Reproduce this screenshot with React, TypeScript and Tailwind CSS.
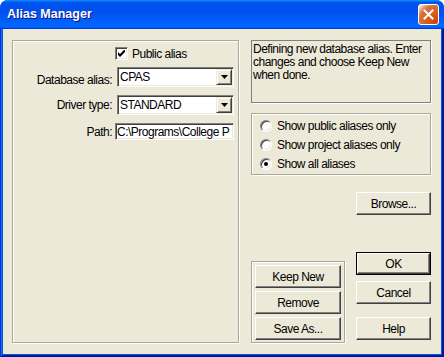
import React from "react";

const sunken =
  "border border-t-[#808080] border-l-[#808080] border-b-white border-r-white shadow-[inset_1px_1px_0_#404040,inset_-1px_-1px_0_#ECE9D8]";
const raised =
  "bg-[#ECE9D8] border border-t-white border-l-white border-b-[#404040] border-r-[#404040] shadow-[inset_-1px_-1px_0_#808080]";
const etched = "border border-[#ACA899] shadow-[inset_1px_1px_0_#fff,1px_1px_0_#fff]";

function Btn({ children, className = "" }: { children: React.ReactNode; className?: string }) {
  return (
    <div className={`h-[23px] flex items-center justify-center text-black ${raised} ${className}`}>
      {children}
    </div>
  );
}

function DefBtn({ children, className = "" }: { children: React.ReactNode; className?: string }) {
  return (
    <div className={`h-[23px] border border-black flex ${className}`}>
      <div className={`flex-1 flex items-center justify-center text-black ${raised}`}>{children}</div>
    </div>
  );
}

function Combo({ value }: { value: string }) {
  return (
    <div className={`ml-[5px] w-[117px] h-[20px] bg-white flex p-[1px] ${sunken}`}>
      <div className="flex-1 flex items-center pl-[1px] leading-none">{value}</div>
      <div className="w-[16px] h-[16px] flex items-center justify-center border border-t-[#ECE9D8] border-l-[#ECE9D8] border-b-[#404040] border-r-[#404040] bg-[#ECE9D8] shadow-[inset_1px_1px_0_#fff,inset_-1px_-1px_0_#808080]">
        <svg width="7" height="4" viewBox="0 0 7 4">
          <path d="M0 0H7L3.5 4Z" fill="#000" />
        </svg>
      </div>
    </div>
  );
}

function Radio({ checked, label }: { checked?: boolean; label: string }) {
  return (
    <div className="h-[20px] flex items-center">
      <div className="w-[12px] h-[12px] rounded-full bg-white border border-t-[#808080] border-l-[#808080] border-b-white border-r-white shadow-[inset_1px_1px_0_#404040,inset_-1px_-1px_0_#ECE9D8] flex items-center justify-center">
        {checked && <div className="w-[4px] h-[4px] rounded-full bg-black" />}
      </div>
      <span className="ml-[5px]">{label}</span>
    </div>
  );
}

export default function App() {
  return (
    <div className="w-[444px] h-[357px] flex flex-col rounded-t-[8px] overflow-hidden bg-[#0855DD] font-['Liberation_Sans',Arial,sans-serif] text-[12px] tracking-[-0.5px] text-black">
      <div className="h-[29px] shrink-0 flex items-center pl-[7px] pr-[5px] bg-[linear-gradient(180deg,#0997ff,#0053ee_8%,#0050ee_40%,#06f_88%,#06f_93%,#005bff_95%,#003dd7_96%,#003dd7)]">
        <span className="text-white font-bold text-[12.5px] tracking-normal [text-shadow:1px_1px_#0f1089] leading-none">
          Alias Manager
        </span>
        <div className="ml-auto w-[21px] h-[21px] rounded-[3px] border border-white flex items-center justify-center bg-[radial-gradient(circle_at_90%_90%,#cc4600_0%,#dc6527_55%,#cd7546_70%,#ffccb2_90%,#fff_100%)]">
          <svg width="11" height="11" viewBox="0 0 11 11">
            <path d="M1.5 1.5L9.5 9.5M9.5 1.5L1.5 9.5" stroke="#fff" strokeWidth="2" strokeLinecap="square" />
          </svg>
        </div>
      </div>
      <div className="flex-1 px-[3px] pb-[3px] shadow-[inset_1px_0_0_#0831d9,inset_-1px_0_0_#00138c,inset_0_-1px_0_#00138c,inset_2px_0_0_#166aee,inset_-2px_0_0_#001ea0,inset_0_-2px_0_#001ea0]">
        <div className="h-full bg-[#ECE9D8] flex pl-[9px] pt-[11px]">
          <div className={`w-[227px] h-[303px] ${etched} pt-[6px] flex flex-col`}>
            <div className="h-[13px] flex items-center pl-[102px]">
              <div className={`w-[13px] h-[13px] bg-white flex items-center justify-center ${sunken}`}>
                <svg width="7" height="7" viewBox="0 0 7 7">
                  <path d="M0 2V5L2 7L7 2V-1L2 4Z" fill="#000" />
                </svg>
              </div>
              <span className="ml-[4px]">Public alias</span>
            </div>
            <div className="mt-[7px] h-[20px] flex">
              <div className="w-[99px] text-right pt-[7px] leading-none">Database alias:</div>
              <Combo value="CPAS" />
            </div>
            <div className="mt-[8px] h-[20px] flex">
              <div className="w-[99px] flex items-center justify-end leading-none">Driver type:</div>
              <Combo value="STANDARD" />
            </div>
            <div className="mt-[8px] h-[17px] flex">
              <div className="w-[99px] flex items-center justify-end leading-none">Path:</div>
              <div className={`ml-[3px] w-[119px] h-[17px] bg-white flex items-center pl-[1px] overflow-hidden whitespace-nowrap leading-none ${sunken}`}>
                C:\Programs\College P
              </div>
            </div>
          </div>
          <div className="ml-[12px] w-[180px] h-[303px] flex flex-col">
            <div className="h-[63px] border border-[#808080] shadow-[1px_1px_0_#fff] px-[1px] pt-[2px] leading-[13px] whitespace-nowrap">
              Defining new database alias. Enter
              <br />
              changes and choose Keep New
              <br />
              when done.
            </div>
            <div className={`mt-[10px] h-[62px] ${etched} pt-[2px] pl-[8px] flex flex-col`}>
              <Radio label="Show public aliases only" />
              <Radio label="Show project aliases only" />
              <Radio checked label="Show all aliases" />
            </div>
            <Btn className="mt-[17px] self-end w-[75px]">Browse...</Btn>
            <div className="mt-auto flex items-end justify-between">
              <div className={`w-[94px] h-[82px] ${etched} pt-[3px] px-[3px] flex flex-col gap-[3px]`}>
                <Btn>Keep New</Btn>
                <Btn>Remove</Btn>
                <Btn>Save As...</Btn>
              </div>
              <div className="w-[75px] flex flex-col mb-[3px]">
                <DefBtn>OK</DefBtn>
                <Btn className="mt-[6px]">Cancel</Btn>
                <Btn className="mt-[13px]">Help</Btn>
              </div>
            </div>
          </div>
        </div>
      </div>
    </div>
  );
}
